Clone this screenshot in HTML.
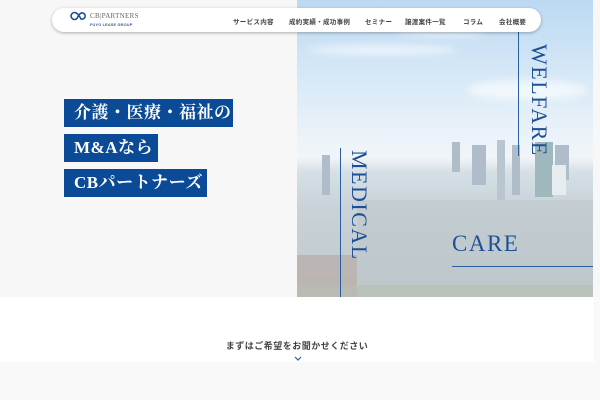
<!DOCTYPE html>
<html><head><meta charset="utf-8">
<style>
*{margin:0;padding:0;box-sizing:border-box}
html,body{width:600px;height:400px;overflow:hidden;background:#f9f9f9;font-family:"Liberation Sans","Noto Sans CJK JP",sans-serif}
.hero{position:absolute;left:0;top:0;width:600px;height:297px;background:#f7f7f7}
.img{position:absolute;left:297px;top:0;width:296px;height:297px;overflow:hidden;
background:linear-gradient(180deg,#bcd9f2 0%,#d6e8f7 25%,#eaf2f9 45%,#f1f5f8 53%,#d5dfe6 58%,#c8d2d8 70%,#c0c8cb 100%)}
.cloud{position:absolute;background:rgba(255,255,255,.6);border-radius:50%;filter:blur(4px)}
.b{position:absolute;background:#aebdc9}
.nav{position:absolute;left:52px;top:8px;width:489px;height:24px;background:#fff;border-radius:12px;box-shadow:0 1px 3px rgba(0,0,0,.3)}
.nav .m{position:absolute;top:8px;font-size:6.5px;color:#444;font-weight:bold;white-space:nowrap;letter-spacing:.3px}
.box{position:absolute;left:64px;height:28px;background:#0b4a97;color:#fff;font-family:"Liberation Serif","Noto Serif CJK SC",serif;font-size:17px;line-height:28px;padding-left:10px;font-weight:bold;letter-spacing:.5px}
.v{position:absolute;writing-mode:vertical-rl;font-family:"Liberation Serif",serif;color:#1d4f94;font-size:22px;letter-spacing:1.5px}
.ln{position:absolute;background:#2a5ea3}
.white{position:absolute;left:0;top:297px;width:594px;height:65px;background:#fff}
</style></head><body>
<div class="hero"></div>
<div class="img">
  <div class="cloud" style="left:0;top:15px;width:120px;height:12px"></div>
  <div class="cloud" style="left:10px;top:45px;width:150px;height:10px"></div>
  <div class="cloud" style="left:100px;top:28px;width:90px;height:8px"></div>
  <div class="cloud" style="left:170px;top:80px;width:120px;height:20px"></div>
  <div class="b" style="left:25px;top:155px;width:8px;height:40px"></div>
  <div class="b" style="left:155px;top:142px;width:8px;height:30px"></div>
  <div class="b" style="left:175px;top:145px;width:14px;height:40px"></div>
  <div class="b" style="left:200px;top:140px;width:8px;height:60px;background:#b9c6cf"></div>
  <div class="b" style="left:215px;top:145px;width:8px;height:50px"></div>
  <div class="b" style="left:238px;top:142px;width:18px;height:55px;background:#9fb8be"></div>
  <div class="b" style="left:258px;top:145px;width:14px;height:35px"></div>
  <div class="b" style="left:255px;top:165px;width:14px;height:30px;background:#e6ecef"></div>
  <div class="b" style="left:0;top:255px;width:60px;height:42px;background:#b8ada6;opacity:.7"></div>
  <div class="b" style="left:60px;top:200px;width:236px;height:97px;background:#bcc6c9;opacity:.5"></div>
  <div class="b" style="left:0;top:285px;width:296px;height:12px;background:#b5c0b0;opacity:.6"></div>
</div>
<div class="ln" style="left:518px;top:30px;width:1px;height:126px"></div>
<div class="v" style="left:526px;top:44px">WELFARE</div>
<div class="ln" style="left:340px;top:148px;width:1px;height:149px"></div>
<div class="v" style="left:346px;top:150px">MEDICAL</div>
<div style="position:absolute;left:452px;top:231px;font-family:'Liberation Serif',serif;font-size:23px;color:#1d4f94;letter-spacing:1.5px">CARE</div>
<div class="ln" style="left:452px;top:266px;width:141px;height:1px"></div>

<div class="nav">
  <svg style="position:absolute;left:17px;top:3px" width="20" height="10" viewBox="0 0 20 10"><path d="M8 2.5A3.5 3.5 0 1 0 8 7.5M8 7.5Q11 1 14 2A3 3 0 1 1 12 8Q10 4 8 2.5" fill="none" stroke="#1d4f94" stroke-width="1.6"/></svg>
  <div style="position:absolute;left:38px;top:4px;font-family:'Liberation Serif',serif;font-size:7px;color:#666;letter-spacing:.3px">CB|PARTNERS</div>
  <div style="position:absolute;left:38px;top:15px;font-size:3.8px;color:#2a5ea3;font-weight:bold;letter-spacing:.2px">FUYO LEASE GROUP</div>
  <div class="m" style="left:181px">サービス内容</div>
  <div class="m" style="left:237px">成約実績・成功事例</div>
  <div class="m" style="left:313px">セミナー</div>
  <div class="m" style="left:353px">譲渡案件一覧</div>
  <div class="m" style="left:411px">コラム</div>
  <div class="m" style="left:447px">会社概要</div>
</div>

<div class="box" style="top:99px;width:169px">介護・医療・福祉の</div>
<div class="box" style="top:134px;width:94px">M&amp;Aなら</div>
<div class="box" style="top:169px;width:143px">CBパートナーズ</div>

<div class="white"></div>
<div style="position:absolute;left:0;width:594px;top:339px;text-align:center;font-size:9px;font-weight:bold;color:#444;letter-spacing:.5px">まずはご希望をお聞かせください</div>
<svg style="position:absolute;left:294px;top:356px" width="8" height="5" viewBox="0 0 8 5"><path d="M1 1L4 4L7 1" fill="none" stroke="#2a5ea3" stroke-width="1.2"/></svg>
</body></html>
